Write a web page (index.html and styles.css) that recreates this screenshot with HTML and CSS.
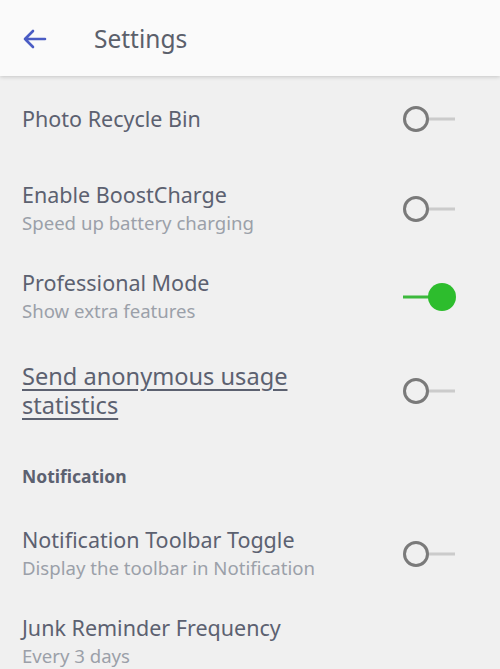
FILE: index.html
```html
<!DOCTYPE html>
<html>
<head>
<meta charset="utf-8">
<link rel="stylesheet" href="styles.css">
</head>
<body>
<div class="app">
  <header class="topbar">
    <svg class="back" width="26" height="24" viewBox="0 0 26 24"><path d="M24 12H4 M12 4L4 12l8 8" fill="none" stroke="#4a5cc4" stroke-width="2.6" stroke-linecap="round" stroke-linejoin="round"/></svg>
    <h1 class="title">Settings</h1>
  </header>
  <main class="list">
    <div class="row row-first">
      <div class="text"><div class="label">Photo Recycle Bin</div></div>
      <svg class="toggle" width="54" height="30" viewBox="0 0 54 30"><line x1="26" y1="15" x2="53" y2="15" stroke="#cbcbcb" stroke-width="3"/><circle cx="14" cy="15" r="11.5" fill="none" stroke="#7a7a7a" stroke-width="3"/></svg>
    </div>
    <div class="row">
      <div class="text"><div class="label">Enable BoostCharge</div><div class="sub">Speed up battery charging</div></div>
      <svg class="toggle" width="54" height="30" viewBox="0 0 54 30"><line x1="26" y1="15" x2="53" y2="15" stroke="#cbcbcb" stroke-width="3"/><circle cx="14" cy="15" r="11.5" fill="none" stroke="#7a7a7a" stroke-width="3"/></svg>
    </div>
    <div class="row">
      <div class="text"><div class="label">Professional Mode</div><div class="sub">Show extra features</div></div>
      <svg class="toggle" width="54" height="30" viewBox="0 0 54 30"><line x1="1" y1="15" x2="30" y2="15" stroke="#3cb93c" stroke-width="3"/><circle cx="40" cy="15" r="14" fill="#2dbd2d"/></svg>
    </div>
    <div class="row row-tall">
      <div class="text"><div class="label link">Send anonymous usage<br>statistics</div></div>
      <svg class="toggle" width="54" height="30" viewBox="0 0 54 30"><line x1="26" y1="15" x2="53" y2="15" stroke="#cbcbcb" stroke-width="3"/><circle cx="14" cy="15" r="11.5" fill="none" stroke="#7a7a7a" stroke-width="3"/></svg>
    </div>
    <div class="section">Notification</div>
    <div class="row">
      <div class="text"><div class="label">Notification Toolbar Toggle</div><div class="sub">Display the toolbar in Notification</div></div>
      <svg class="toggle" width="54" height="30" viewBox="0 0 54 30"><line x1="26" y1="15" x2="53" y2="15" stroke="#cbcbcb" stroke-width="3"/><circle cx="14" cy="15" r="11.5" fill="none" stroke="#7a7a7a" stroke-width="3"/></svg>
    </div>
    <div class="row">
      <div class="text"><div class="label">Junk Reminder Frequency</div><div class="sub">Every 3 days</div></div>
    </div>
  </main>
</div>
</body>
</html>
```
FILE: styles.css
```css
html, body {
  margin: 0;
  padding: 0;
  background: #f0f0f0;
  font-family: "Noto Sans", "Open Sans", sans-serif;
  overflow: hidden;
}
.app {
  width: 500px;
  height: 669px;
  overflow: hidden;
}
.topbar {
  height: 76px;
  background: #fafafa;
  display: flex;
  align-items: center;
  padding-left: 21px;
  box-shadow: 0 1px 4px rgba(0,0,0,0.18);
  position: relative;
  z-index: 1;
}
.back {
  display: block;
  margin-top: 2px;
}
.title {
  margin: 0 0 0 47px;
  font-size: 24.5px;
  font-weight: 400;
  color: #5b606b;
}
.list {
  display: flex;
  flex-direction: column;
}
.row {
  box-sizing: border-box;
  min-height: 88px;
  padding: 0 44px 0 22px;
  display: flex;
  align-items: center;
  justify-content: space-between;
}
.row-first {
  min-height: 89px;
  padding-bottom: 4px;
}
.row-tall {
  min-height: 100px;
}
.text {
  display: flex;
  flex-direction: column;
}
.label {
  font-size: 21.5px;
  line-height: 28px;
  color: #5c6170;
}
.link {
  font-size: 23.6px;
  line-height: 29px;
  text-decoration: underline;
  text-underline-offset: 4px;
  text-decoration-thickness: 1.5px;
}
.sub {
  font-size: 18.6px;
  line-height: 28px;
  color: #9ba0a9;
}
.section {
  height: 69px;
  display: flex;
  align-items: center;
  padding-left: 22px;
  font-size: 17.5px;
  font-weight: 700;
  color: #5c6170;
}
.toggle {
  display: block;
  flex: none;
}
```
